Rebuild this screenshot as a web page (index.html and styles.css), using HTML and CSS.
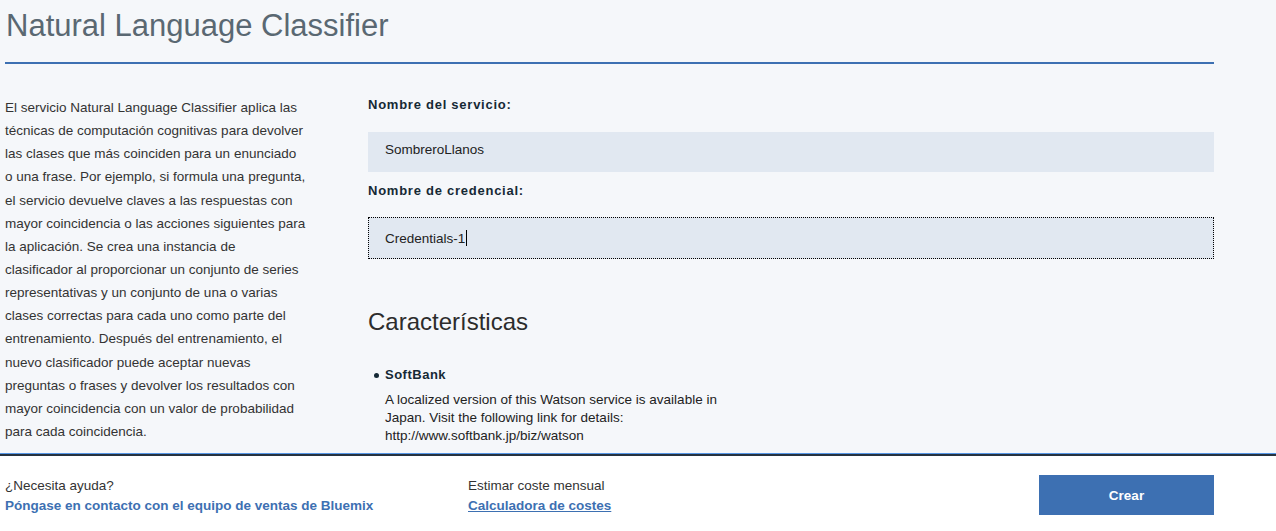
FILE: index.html
```html
<!DOCTYPE html>
<html lang="es">
<head>
<meta charset="utf-8">
<title>Natural Language Classifier</title>
<link rel="stylesheet" href="styles.css">
</head>
<body>
<div class="page">
  <main class="main">
    <header class="head">
      <h1 class="title">Natural Language Classifier</h1>
    </header>
    <div class="cols">
      <p class="intro">El servicio Natural Language Classifier aplica las<br>técnicas de computación cognitivas para devolver<br>las clases que más coinciden para un enunciado<br>o una frase. Por ejemplo, si formula una pregunta,<br>el servicio devuelve claves a las respuestas con<br>mayor coincidencia o las acciones siguientes para<br>la aplicación. Se crea una instancia de<br>clasificador al proporcionar un conjunto de series<br>representativas y un conjunto de una o varias<br>clases correctas para cada uno como parte del<br>entrenamiento. Después del entrenamiento, el<br>nuevo clasificador puede aceptar nuevas<br>preguntas o frases y devolver los resultados con<br>mayor coincidencia con un valor de probabilidad<br>para cada coincidencia.</p>
      <section class="form">
        <div class="label">Nombre del servicio:</div>
        <div class="field field-first"><span class="value">SombreroLlanos</span></div>
        <div class="label label-second">Nombre de credencial:</div>
        <div class="field field-focus"><span class="value">Credentials-1</span><span class="caret"></span></div>
        <h2 class="features-title">Características</h2>
        <ul class="features">
          <li class="feature">
            <div class="feature-name">SoftBank</div>
            <p class="feature-desc">A localized version of this Watson service is available in Japan. Visit the following link for details: http://www.softbank.jp/biz/watson</p>
          </li>
        </ul>
      </section>
    </div>
  </main>
  <footer class="footer">
    <div class="help">
      <div class="muted">¿Necesita ayuda?</div>
      <a class="link" href="#">Póngase en contacto con el equipo de ventas de Bluemix</a>
    </div>
    <div class="cost">
      <div class="muted">Estimar coste mensual</div>
      <a class="link underline" href="#">Calculadora de costes</a>
    </div>
    <button class="create" type="button">Crear</button>
  </footer>
</div>
</body>
</html>
```
FILE: styles.css
```css
html, body {
  margin: 0;
  padding: 0;
}
body {
  background: #f5f7fa;
  font-family: "Liberation Sans", Arial, sans-serif;
  color: #333;
}
.page {
  height: 531px;
  display: flex;
  flex-direction: column;
  overflow: hidden;
}
.main {
  flex: 1;
  min-height: 0;
  overflow: hidden;
  padding: 0 62px 0 5px;
}
.head {
  border-bottom: 2px solid #3d70b2;
  height: 64px;
  box-sizing: border-box;
}
.title {
  margin: 0;
  padding: 8px 0 0 1px;
  font-size: 31px;
  line-height: 36px;
  font-weight: 400;
  color: #5a6872;
}
.cols {
  display: grid;
  grid-template-columns: 310px 1fr;
  column-gap: 53px;
  padding-top: 32px;
}
.intro {
  margin: 0;
  font-size: 13.5px;
  line-height: 23.14px;
  white-space: nowrap;
  color: #333;
}
.form {
  min-width: 0;
}
.label {
  font-size: 13px;
  line-height: 18px;
  font-weight: 700;
  letter-spacing: 0.75px;
  color: #152935;
}
.label-second {
  margin-top: 10px;
}
.field {
  background: #e1e8f1;
  height: 40px;
  box-sizing: content-box;
  display: flex;
  align-items: center;
  padding-left: 17px;
  font-size: 13.5px;
  color: #222;
}
.field-first {
  margin-top: 18px;
  height: 35px;
  padding-bottom: 5px;
}
.field-focus {
  margin-top: 17px;
  border: 1px dotted #000;
  padding-left: 16px;
}
.caret {
  width: 1px;
  height: 16px;
  background: #000;
  margin-left: 1px;
}
.features-title {
  margin: 48px 0 0;
  font-size: 24px;
  line-height: 30px;
  font-weight: 400;
  color: #2c2c2c;
}
.features {
  margin: 29px 0 0;
  padding: 0 0 0 17px;
  list-style: none;
}
.feature {
  position: relative;
}
.feature::before {
  content: "";
  position: absolute;
  left: -11px;
  top: 7px;
  width: 5px;
  height: 5px;
  border-radius: 50%;
  background: #152935;
}
.feature-name {
  font-size: 13px;
  line-height: 18px;
  font-weight: 700;
  letter-spacing: 0.5px;
  color: #152935;
}
.feature-desc {
  margin: 7px 0 0;
  max-width: 345px;
  font-size: 13.5px;
  line-height: 18px;
  color: #222;
}
.footer {
  flex: 0 0 78px;
  box-sizing: border-box;
  background: #fff;
  border-top: 1px solid #5596e6;
  box-shadow: inset 0 2px 0 #263340;
  display: flex;
  align-items: flex-start;
  padding: 22px 62px 0 5px;
  font-size: 13.5px;
}
.help {
  width: 463px;
}
.muted {
  line-height: 20px;
  color: #333;
}
.link {
  display: block;
  line-height: 20px;
  font-weight: 700;
  color: #3d70b2;
  text-decoration: none;
}
.underline {
  text-decoration: underline;
}
.cost {
  flex: 1;
}
.create {
  margin-top: -1px;
  width: 175px;
  height: 40px;
  border: 0;
  background: #3d70b2;
  color: #fff;
  font-family: "Liberation Sans", Arial, sans-serif;
  font-size: 13.5px;
  font-weight: 700;
  cursor: pointer;
}
```
